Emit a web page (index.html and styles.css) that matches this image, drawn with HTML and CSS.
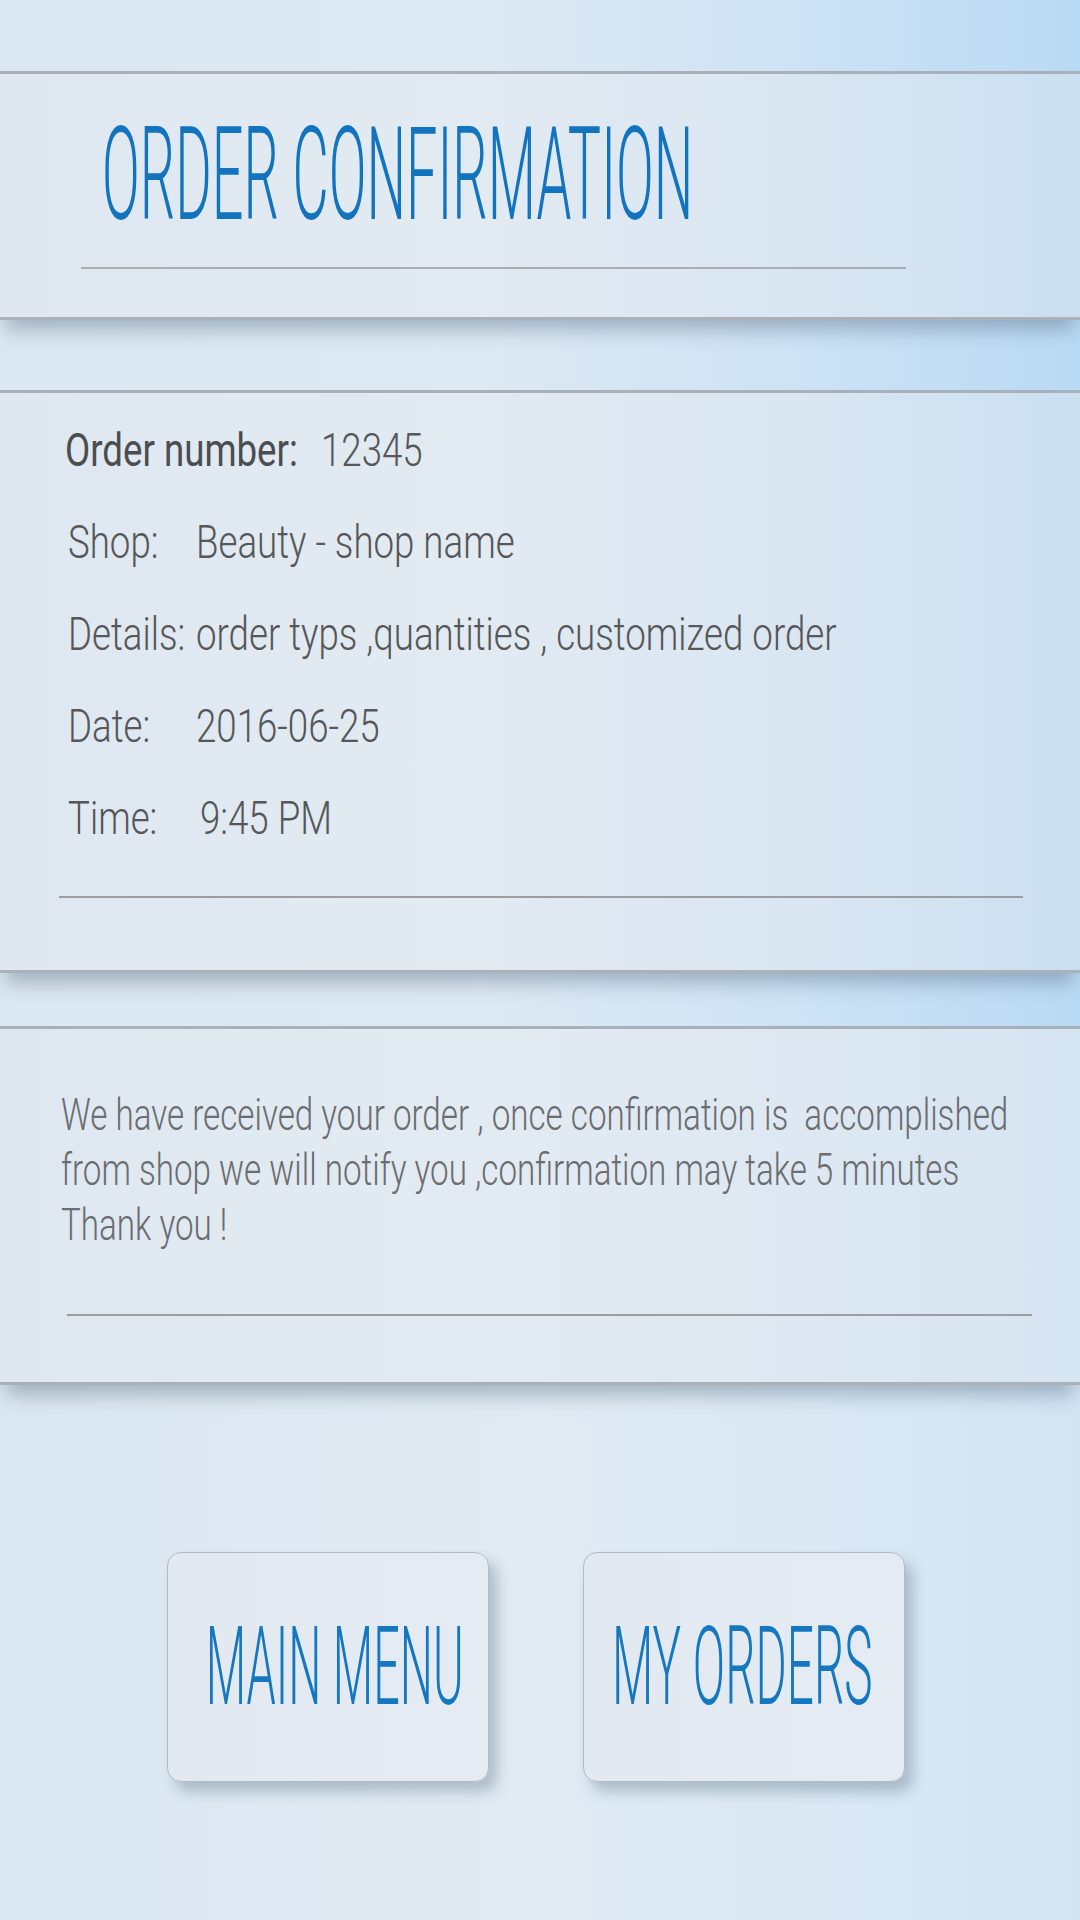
FILE: index.html
```
<!DOCTYPE html>
<html lang="en">
<head>
<meta charset="utf-8">
<title>Order Confirmation</title>
<link rel="stylesheet" href="styles.css">
</head>
<body>
<div class="page">
  <header class="panel panel-header">
    <h1 class="title"><span class="title-text">ORDER CONFIRMATION</span></h1>
    <div class="rule rule-title"></div>
  </header>

  <section class="panel panel-details">
    <div class="rows">
      <div class="row"><span class="cell cell-wide"><span class="label label-strong">Order number:</span></span><span class="value">12345</span></div>
      <div class="row"><span class="cell"><span class="label">Shop:</span></span><span class="value">Beauty - shop name</span></div>
      <div class="row"><span class="cell"><span class="label">Details:</span></span><span class="value">order typs ,quantities , customized order</span></div>
      <div class="row"><span class="cell"><span class="label">Date:</span></span><span class="value">2016-06-25</span></div>
      <div class="row"><span class="cell cell-time"><span class="label">Time:</span></span><span class="value">9:45 PM</span></div>
    </div>
    <div class="rule rule-details"></div>
  </section>

  <section class="panel panel-message">
    <div class="message">
      <span class="line">We have received your order , once confirmation is&nbsp; accomplished</span>
      <span class="line">from shop we will notify you ,confirmation may take 5 minutes</span>
      <span class="line">Thank you !</span>
    </div>
    <div class="rule rule-message"></div>
  </section>

  <div class="lower">
    <nav class="actions">
      <a class="btn" href="#"><span class="btn-text btn-text-menu">MAIN MENU</span></a>
      <a class="btn" href="#"><span class="btn-text btn-text-orders">MY ORDERS</span></a>
    </nav>
  </div>
</div>
</body>
</html>
```
FILE: styles.css
```
* { box-sizing: border-box; }
html, body { margin: 0; padding: 0; }
body {
  width: 1080px;
  height: 1920px;
  overflow: hidden;
  font-family: Roboto, "Liberation Sans", sans-serif;
  background: linear-gradient(90deg, #dbe7f1 0%, #dde9f3 45%, #cfe3f4 72%, #b9daf4 100%);
}
.page {
  display: flex;
  flex-direction: column;
  width: 1080px;
  height: 1920px;
  padding-top: 71px;
  overflow: hidden;
}
.panel {
  position: relative;
  z-index: 1;
  border-top: 3px solid #a8b1b9;
  border-bottom: 3px solid #aab1b8;
  box-shadow: 0 16px 18px -6px rgba(70, 92, 115, 0.38);
  background: linear-gradient(90deg, #dfe8f0 0%, #e2eaf2 45%, #d9e6f2 75%, #cbdff1 100%);
}
.rule { height: 2px; }

/* header */
.panel-header { padding: 36px 0 48px; }
.title {
  margin: 0;
  padding-left: 102px;
  font-size: 130px;
  line-height: 130px;
  font-weight: 300;
  color: #1273bf;
  white-space: nowrap;
}
.title-text { display: inline-block; transform: scaleX(0.429); transform-origin: 0 0; }
.rule-title { margin: 27px 0 0 81px; width: 825px; background: #aaadb1; }

/* details */
.panel-details { margin-top: 70px; padding: 11px 0 72px; }
.rows { display: flex; flex-direction: column; padding-left: 68px; }
.row {
  display: flex;
  height: 92px;
  line-height: 92px;
  font-size: 47px;
  font-weight: 300;
  color: #555759;
  white-space: nowrap;
}
.cell { flex: 0 0 128px; min-width: 0; }
.cell-wide { flex-basis: 256px; margin-left: -3px; }
.cell-time { flex-basis: 132px; }
.label, .value { display: inline-block; transform: scaleX(0.78); transform-origin: 0 50%; }
.label-strong { font-weight: 400; color: #4b4d50; }
.rule-details { margin: 32px 0 0 59px; width: 964px; background: #9b9da0; }

/* message */
.panel-message {
  margin-top: 53px;
  padding: 58px 0 66px;
  background: linear-gradient(90deg, #dfe8f0 0%, #e3ebf2 45%, #dde8f2 75%, #d6e5f2 100%);
}
.message {
  display: flex;
  flex-direction: column;
  align-items: flex-start;
  padding-left: 61px;
  font-size: 45px;
  line-height: 55px;
  font-weight: 300;
  color: #6b6d70;
  white-space: nowrap;
}
.line { display: inline-block; transform: scaleX(0.737); transform-origin: 0 50%; }
.rule-message { margin: 62px 0 0 67px; width: 965px; background: #9b9da0; }

/* lower area with actions */
.lower {
  flex: 1;
  margin-top: -30px;
  padding-top: 197px;
  background: linear-gradient(90deg, #dbe7f1 0%, #e1ebf4 50%, #d8e8f4 82%, #d2e4f2 100%);
}
.actions {
  display: flex;
  gap: 94px;
  padding-left: 167px;
}
.btn {
  width: 322px;
  height: 230px;
  display: flex;
  align-items: center;
  justify-content: center;
  border: 1px solid #b3bac2;
  border-radius: 14px;
  background: linear-gradient(90deg, #e2e9f0 0%, #e4ebf2 100%);
  box-shadow: 8px 10px 14px rgba(60, 82, 105, 0.3);
  text-decoration: none;
}
.btn-text {
  flex: 0 0 auto;
  display: inline-block;
  font-size: 110px;
  line-height: 110px;
  font-weight: 300;
  color: #1577c0;
  white-space: nowrap;
  transform-origin: 50% 50%;
}
.btn-text-menu { transform: scaleX(0.425); margin-left: 14px; }
.btn-text-orders { transform: scaleX(0.434); margin-right: 4px; }
```
